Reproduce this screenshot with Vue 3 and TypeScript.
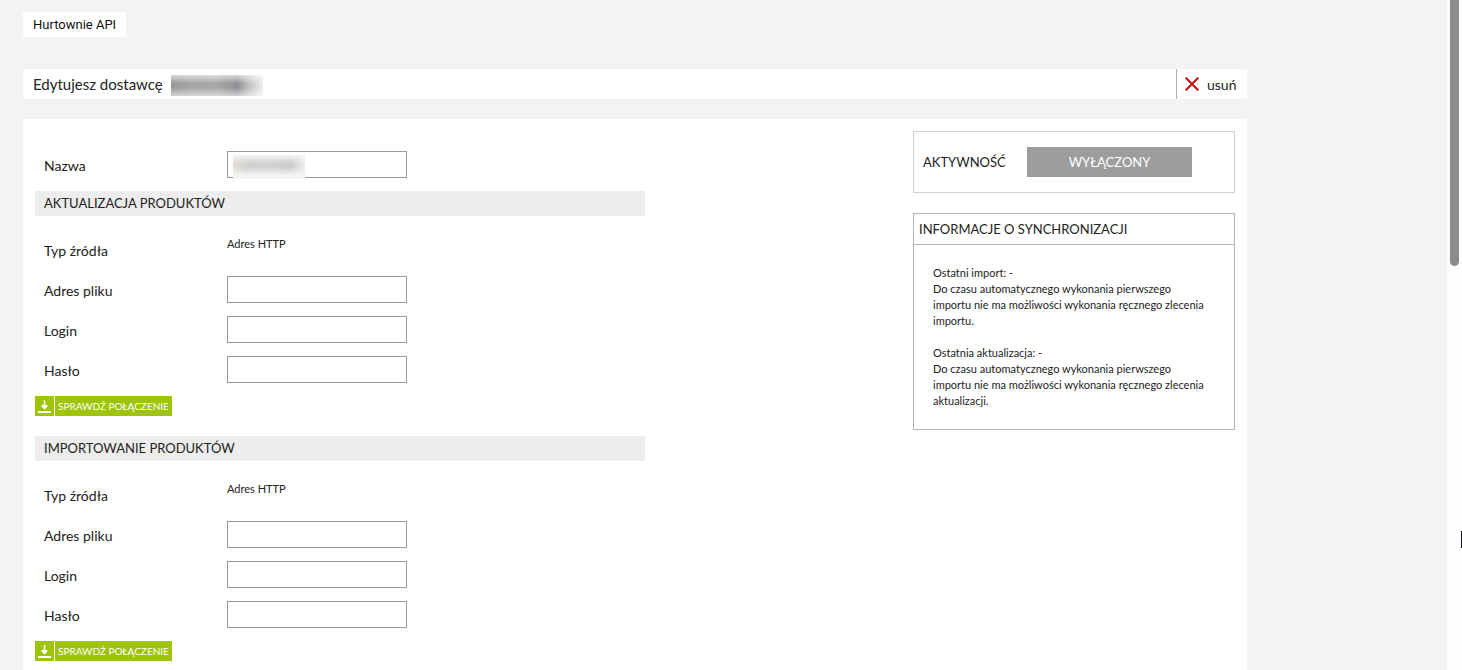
<script setup lang="ts">
import { ref } from 'vue'

interface Field { id: string; label: string; type: string }
interface Section { id: string; title: string; fields: Field[] }

const name = ref('')
const values = ref<Record<string, string>>({})

const makeSection = (id: string, title: string): Section => ({
  id,
  title,
  fields: [
    { id: `${id}-url`, label: 'Adres pliku', type: 'text' },
    { id: `${id}-login`, label: 'Login', type: 'text' },
    { id: `${id}-password`, label: 'Hasło', type: 'password' },
  ],
})

const sections: Section[] = [
  makeSection('update', 'AKTUALIZACJA PRODUKTÓW'),
  makeSection('import', 'IMPORTOWANIE PRODUKTÓW'),
]
</script>

<template>
  <div class="page">
    <main class="content">
      <nav><a class="tab" href="#">Hurtownie API</a></nav>

      <header class="title-bar">
        <h1>Edytujesz dostawcę <span class="hidden-name"></span></h1>
        <button class="remove" type="button">
          <svg width="14" height="14" viewBox="0 0 14 14" aria-hidden="true">
            <path d="M0.7 0.7L13.3 13.3M13.3 0.7L0.7 13.3" stroke="#c90a0a" stroke-width="2" />
          </svg>
          <span>usuń</span>
        </button>
      </header>

      <div class="panel">
        <form class="form" @submit.prevent>
          <div class="row">
            <label for="name">Nazwa</label>
            <div class="name-field">
              <input id="name" v-model="name" type="text" />
              <span class="hidden-value"></span>
            </div>
          </div>
          <section v-for="s in sections" :key="s.id">
            <h2>{{ s.title }}</h2>
            <div class="row">
              <span class="label">Typ źródła</span>
              <span class="value">Adres HTTP</span>
            </div>
            <div v-for="f in s.fields" :key="f.id" class="row">
              <label :for="f.id">{{ f.label }}</label>
              <input :id="f.id" v-model="values[f.id]" :type="f.type" />
            </div>
            <button class="check" type="button">
              <span class="check-icon">
                <svg width="13" height="13" viewBox="0 0 13 13" aria-hidden="true">
                  <path d="M5.700 0h1.600v5H9.500V6.500L6.500 9.500L3.500 6.500V5H5.700zM0 11h13v2H0z" fill="#fff" />
                </svg>
              </span>
              <span class="check-text">SPRAWDŹ POŁĄCZENIE</span>
            </button>
          </section>
        </form>

        <aside class="side">
          <div class="status">
            <span id="status-label">AKTYWNOŚĆ</span>
            <button type="button" aria-describedby="status-label">WYŁĄCZONY</button>
          </div>
          <section class="info">
            <h3>INFORMACJE O SYNCHRONIZACJI</h3>
            <div class="info-body">
              <p>Ostatni import: -<br />Do czasu automatycznego wykonania pierwszego<br />importu nie ma możliwości wykonania ręcznego zlecenia importu.</p>
              <p>Ostatnia aktualizacja: -<br />Do czasu automatycznego wykonania pierwszego<br />importu nie ma możliwości wykonania ręcznego zlecenia aktualizacji.</p>
            </div>
          </section>
        </aside>
      </div>
    </main>
    <div class="scrollbar">
      <div class="thumb"></div>
      <div class="edge-mark"></div>
    </div>
  </div>
</template>

<style>
body {
  margin: 0;
  background: #f3f3f3;
}
</style>

<style scoped>
* {
  box-sizing: border-box;
}
.page {
  display: flex;
  height: 100vh;
  overflow: hidden;
  background: #f3f3f3;
  color: #222;
  font-family: Lato, sans-serif;
  font-size: 14px;
}
button,
input {
  font-family: inherit;
  color: inherit;
}
button {
  border: 0;
  padding: 0;
  cursor: pointer;
}
h1,
h2,
h3,
p {
  margin: 0;
  font-weight: 400;
}
.content {
  flex: 1;
  display: flex;
  flex-direction: column;
  max-width: 1247px;
  padding: 12px 0 0 23px;
}
nav {
  display: flex;
}
.tab {
  padding: 0 10px;
  background: #fff;
  color: #111;
  font: 13px/25px Roboto, sans-serif;
  text-decoration: none;
}
.title-bar {
  display: flex;
  justify-content: space-between;
  height: 30px;
  margin: 32px 0 20px;
  background: #fff;
}
h1 {
  display: flex;
  align-items: center;
  gap: 8px;
  padding-left: 10px;
  font-size: 15px;
  line-height: 30px;
}
.hidden-name {
  width: 92px;
  height: 21px;
  margin-top: 3px;
  background:
    linear-gradient(#ffffffa0, #fff0 40%, #fff0 60%, #ffffff90),
    linear-gradient(90deg, #999, #a4a4a4 20%, #a8a8a8 50%, #929096 72%, #c4c4c4 85%, #eee);
}
.remove {
  display: flex;
  align-items: center;
  gap: 8px;
  width: 71px;
  padding-left: 8px;
  border-left: 1px solid #b0b0b0;
  background: #fff;
  font-size: 14px;
}
.panel {
  flex: 1;
  display: flex;
  justify-content: space-between;
  align-items: flex-start;
  padding: 12px;
  background: #fff;
}
.form {
  flex: 0 1 610px;
  padding-top: 20px;
}
.row {
  display: flex;
  align-items: flex-start;
  height: 40px;
}
label,
.label {
  width: 192px;
  padding-left: 9px;
  line-height: 30px;
}
.value {
  font-size: 11px;
  line-height: 16px;
}
input {
  width: 180px;
  height: 27px;
  padding: 0 6px;
  border: 1px solid #999;
  border-radius: 0;
  background: #fff;
  font-size: 13px;
}
.name-field {
  position: relative;
  display: flex;
}
.hidden-value {
  position: absolute;
  left: 6px;
  top: 4px;
  width: 72px;
  height: 24px;
  background:
    linear-gradient(#f4f4f4, #fff0 35%, #fff0 50%, #f4f4f4 85%),
    linear-gradient(90deg, #e2dfd4, #d0d0d0 20%, #d2d2d2 50%, #cbcacc 80%, #eee);
}
h2 {
  margin-bottom: 20px;
  padding-left: 9px;
  background: #ededed;
  font-size: 13px;
  line-height: 25px;
}
.check {
  display: flex;
  gap: 1px;
  height: 20px;
  margin-bottom: 20px;
  background: #fff;
  color: #fff;
  font-size: 10px;
  line-height: 20px;
}
.check-icon {
  display: grid;
  place-items: center;
  width: 19px;
  background: #9dc408;
}
.check-text {
  padding: 0 3px;
  background: #9dc408;
}
.side {
  flex: 0 0 322px;
}
.status {
  display: flex;
  align-items: center;
  height: 62px;
  margin-bottom: 20px;
  padding-left: 9px;
  border: 1px solid #d0d0d0;
  font-size: 13px;
}
.status span {
  width: 104px;
}
.status button {
  width: 165px;
  height: 30px;
  background: #9d9d9d;
  color: #fff;
  font-size: 13px;
}
.info {
  border: 1px solid #b4b4b4;
}
h3 {
  padding-left: 5px;
  border-bottom: 1px solid #b4b4b4;
  font-size: 13px;
  line-height: 30px;
}
.info-body {
  display: grid;
  gap: 16px;
  padding: 20px 19px;
  font-size: 11px;
  line-height: 16px;
}
.scrollbar {
  position: relative;
  width: 15px;
  margin-left: auto;
  background: #fdfdfd;
}
.thumb {
  width: 9px;
  height: 266px;
  margin-left: 3px;
  border-radius: 0 0 5px 5px;
  background: #8b8b8b;
}
.edge-mark {
  position: absolute;
  right: 0;
  top: 531px;
  width: 1px;
  height: 17px;
  background: #15151f;
}
</style>
